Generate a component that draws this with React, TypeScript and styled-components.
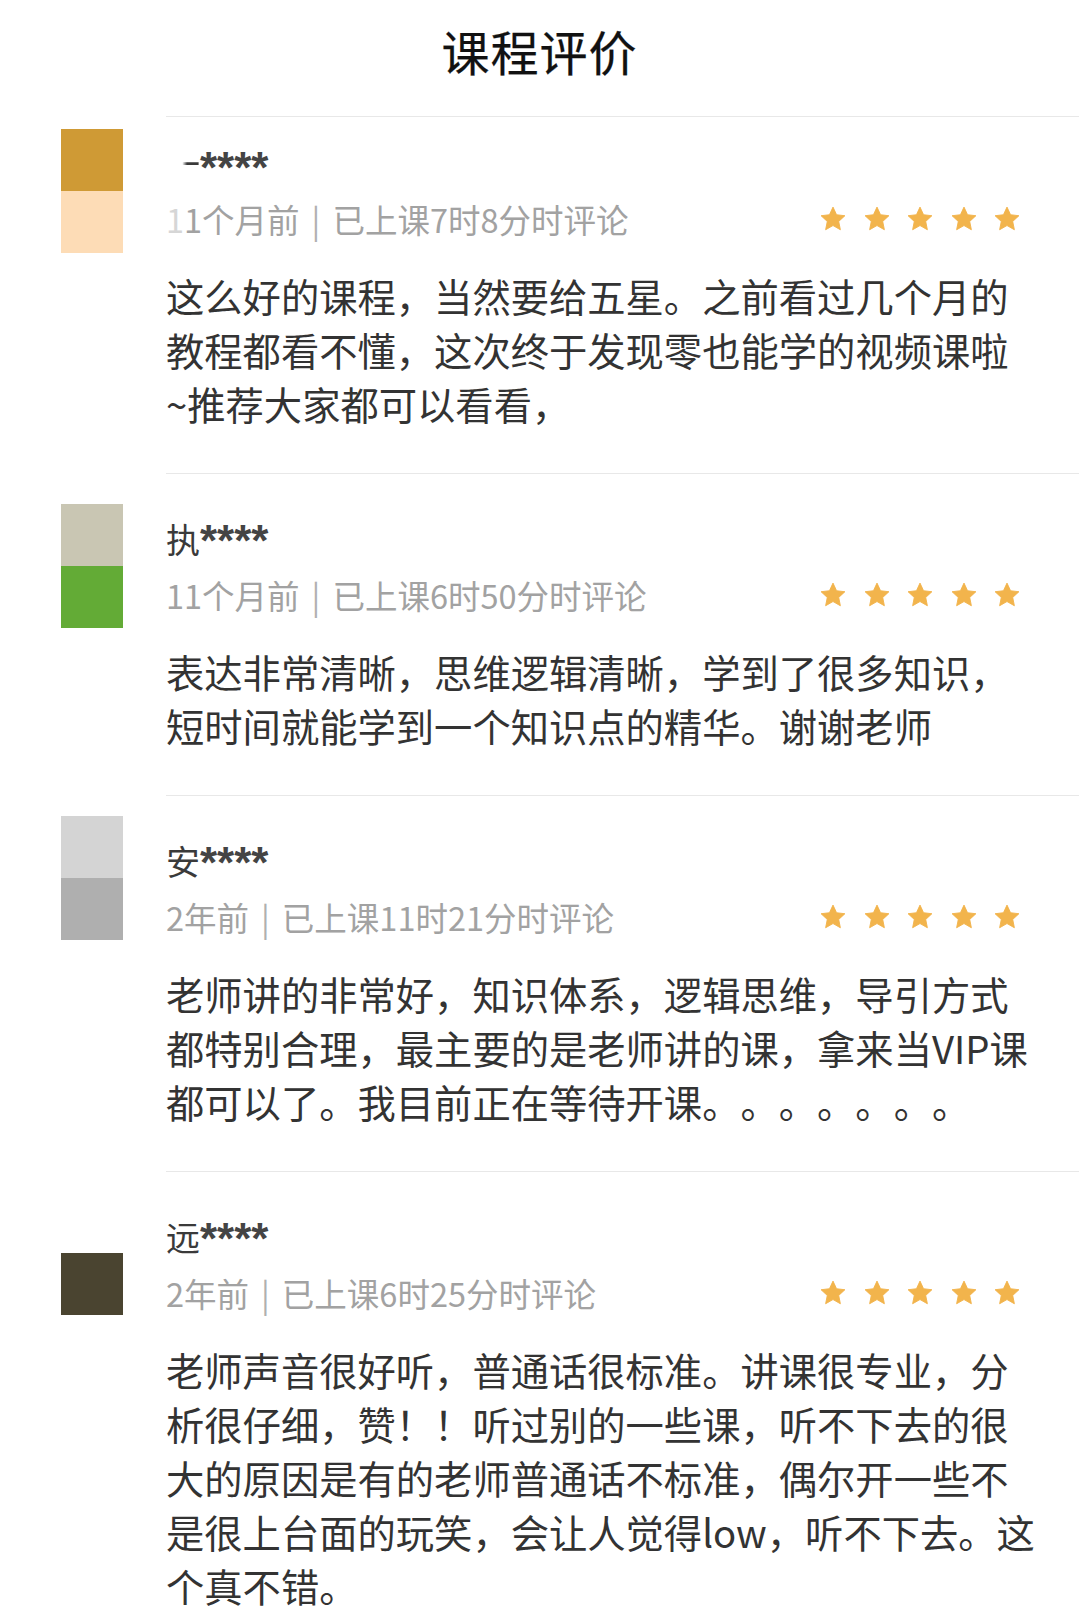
import React from "react";
import styled, { createGlobalStyle } from "styled-components";

type Review = {
  name: string;
  maskFirst?: boolean;
  ago: string;
  fadeFirst?: boolean;
  study: string;
  lines: string[];
  avatarTop: string;
  avatarBottom: string;
  avatarOffset: number;
  padTop: number;
};

const reviews: Review[] = [
  {
    name: "一",
    maskFirst: true,
    ago: "11个月前",
    fadeFirst: true,
    study: "已上课7时8分时评论",
    lines: [
      "这么好的课程，当然要给五星。之前看过几个月的",
      "教程都看不懂，这次终于发现零也能学的视频课啦",
      "~推荐大家都可以看看，",
    ],
    avatarTop: "#cf9a35",
    avatarBottom: "#fddcb6",
    avatarOffset: 13,
    padTop: 22,
  },
  {
    name: "执",
    ago: "11个月前",
    study: "已上课6时50分时评论",
    lines: [
      "表达非常清晰，思维逻辑清晰，学到了很多知识，",
      "短时间就能学到一个知识点的精华。谢谢老师",
    ],
    avatarTop: "#c9c6b3",
    avatarBottom: "#63ab36",
    avatarOffset: 31,
    padTop: 41,
  },
  {
    name: "安",
    ago: "2年前",
    study: "已上课11时21分时评论",
    lines: [
      "老师讲的非常好，知识体系，逻辑思维，导引方式",
      "都特别合理，最主要的是老师讲的课，拿来当VIP课",
      "都可以了。我目前正在等待开课。。。。。。。",
    ],
    avatarTop: "#d4d4d4",
    avatarBottom: "#afafaf",
    avatarOffset: 21,
    padTop: 41,
  },
  {
    name: "远",
    ago: "2年前",
    study: "已上课6时25分时评论",
    lines: [
      "老师声音很好听，普通话很标准。讲课很专业，分",
      "析很仔细，赞！！听过别的一些课，听不下去的很",
      "大的原因是有的老师普通话不标准，偶尔开一些不",
      "是很上台面的玩笑，会让人觉得low，听不下去。这",
      "个真不错。",
    ],
    avatarTop: "#ffffff",
    avatarBottom: "#4a4430",
    avatarOffset: 20,
    padTop: 41,
  },
];

// ===== styled-components =====

const GlobalStyle = createGlobalStyle`
  html, body {
    margin: 0;
    padding: 0;
    background: #ffffff;
  }
  body {
    font-family: "Noto Sans CJK SC", "Noto Sans", sans-serif;
    color: #333333;
    text-spacing-trim: space-all;
  }
`;

const Page = styled.div`
  width: 1079px;
  min-height: 1622px;
  background: #ffffff;
  overflow: hidden;
`;

const Header = styled.header`
  height: 100px;
  margin-bottom: 16px;
  display: flex;
  align-items: center;
  justify-content: center;
`;

const Title = styled.h1`
  margin: 0;
  font-size: 48px;
  font-weight: 400;
  line-height: 60px;
  color: #111111;
  letter-spacing: 1px;
  -webkit-text-stroke: 0.25px #111111;
`;

const Row = styled.section`
  display: flex;
  align-items: flex-start;
`;

const Avatar = styled.div<{ $top: string; $bottom: string; $offset: number }>`
  flex: 0 0 62px;
  width: 62px;
  height: 124px;
  margin-left: 61px;
  margin-top: ${({ $offset }) => $offset}px;
  background: linear-gradient(
    to bottom,
    ${({ $top }) => $top} 0 50%,
    ${({ $bottom }) => $bottom} 50% 100%
  );
`;

const Content = styled.div<{ $padTop: number }>`
  flex: 1;
  min-width: 0;
  margin-left: 43px;
  border-top: 1px solid #e8e8e8;
  padding-top: ${({ $padTop }) => $padTop}px;
  padding-bottom: 42px;
`;

const Name = styled.div`
  font-size: 34px;
  line-height: 48px;
  height: 48px;
  color: #3a3a3a;
  white-space: nowrap;
`;

const MaskedChar = styled.span`
  display: inline-block;
  vertical-align: 3px;
  background: linear-gradient(90deg, #ffffff 0 48%, #3a3a3a 62%);
  -webkit-background-clip: text;
  background-clip: text;
  color: transparent;
`;

const Asterisks = styled.span`
  font-family: "Liberation Sans", Arial, sans-serif;
  font-size: 44px;
  font-weight: 700;
  letter-spacing: 0px;
  color: #444444;
  vertical-align: -3px;
`;

const MetaRow = styled.div`
  margin-top: 8px;
  height: 48px;
  display: flex;
  align-items: center;
  justify-content: space-between;
`;

const Meta = styled.span`
  font-size: 32.5px;
  line-height: 48px;
  color: #a2a2a2;
  white-space: nowrap;
`;

const FadedChar = styled.span`
  color: #d6d6d6;
`;

const Sep = styled.span`
  display: inline-block;
  margin: 0 12px;
  color: #b0b0b0;
`;

const Stars = styled.div`
  display: flex;
  align-items: center;
  gap: 15.5px;
  margin-right: 58px;
`;

const Comment = styled.div`
  margin-top: 26px;
  font-size: 38.3px;
  line-height: 54px;
  color: #333333;
`;

const Line = styled.div`
  white-space: nowrap;
`;

// ===== component =====

function Star() {
  return (
    <svg width="28" height="28" viewBox="0 0 24 24">
      <path
        d="M12 1.8l3.05 6.55 7.15.85-5.3 4.9 1.42 7.1L12 17.6l-6.32 3.6 1.42-7.1-5.3-4.9 7.15-.85z"
        fill="#f2b44c"
        stroke="#f2b44c"
        strokeWidth="0.8"
        strokeLinejoin="round"
      />
    </svg>
  );
}

function ReviewItem({ review }: { review: Review }) {
  const agoFirst = review.ago.slice(0, 1);
  const agoRest = review.ago.slice(1);

  return (
    <Row>
      <Avatar
        $top={review.avatarTop}
        $bottom={review.avatarBottom}
        $offset={review.avatarOffset}
      />
      <Content $padTop={review.padTop}>
        <Name>
          {review.maskFirst ? <MaskedChar>{review.name}</MaskedChar> : review.name}
          <Asterisks>****</Asterisks>
        </Name>
        <MetaRow>
          <Meta>
            {review.fadeFirst ? <FadedChar>{agoFirst}</FadedChar> : agoFirst}
            {agoRest}
            <Sep>|</Sep>
            {review.study}
          </Meta>
          <Stars>
            {[0, 1, 2, 3, 4].map((i) => (
              <Star key={i} />
            ))}
          </Stars>
        </MetaRow>
        <Comment>
          {review.lines.map((line, i) => (
            <Line key={i}>{line}</Line>
          ))}
        </Comment>
      </Content>
    </Row>
  );
}

export default function App() {
  return (
    <Page>
      <GlobalStyle />
      <Header>
        <Title>课程评价</Title>
      </Header>
      {reviews.map((r, i) => (
        <ReviewItem key={i} review={r} />
      ))}
    </Page>
  );
}
